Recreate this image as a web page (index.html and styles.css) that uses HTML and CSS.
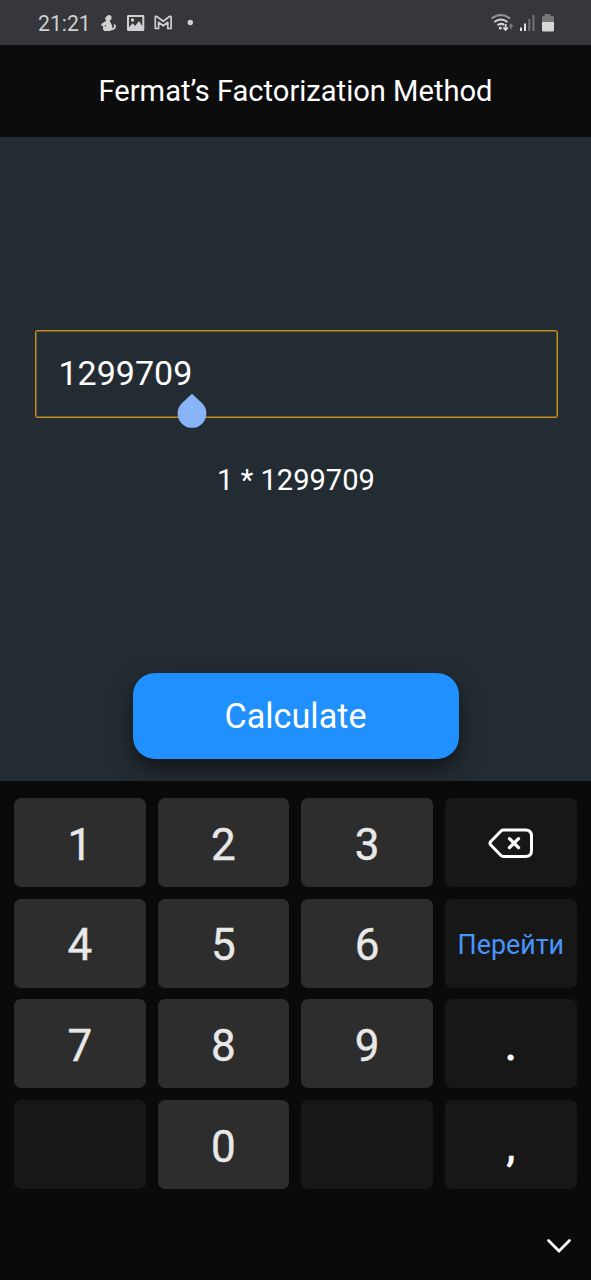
FILE: index.html
```html
<!DOCTYPE html>
<html lang="en">
<head>
<meta charset="utf-8">
<title>Fermat’s Factorization Method</title>
<link rel="stylesheet" href="styles.css">
</head>
<body>
<div class="screen">
  <div class="status">
    <span class="time">21:21</span>
    <svg class="status-left" width="98" height="20" viewBox="100 13 98 20">
      <g fill="#d0d1d1">
        <path d="M106.200 16.800L108.300 15q3.300-.3 3.300 2.700 0 2.300-2 3.100l1.700 3.200q1.500 1.800.9 4.300 1.800-.6 2.100-2.300l-.8-.5 1-1.700 1.600 2.200q-.3 3.800-4.500 4.300l-1.600.6h-6q-1.600-2-.8-4.300l-1.900-1.200v-1.400l3.800-2.600 1.300-.8q-1.600-1-1.300-2.600z"/>
        <path fill-rule="evenodd" d="M128.500 15H143q1.300 0 1.300 1.300v13.400q0 1.300-1.300 1.300h-14.700q-1.300 0-1.300-1.300V16.300q0-1.300 1.500-1.300zM129 17v10.300l3.700-4 2.500 2.800 3.700-5 3.400 5V17z"/>
        <circle cx="132.500" cy="20" r="1.700"/>
        <circle cx="190.300" cy="22.500" r="2.700"/>
      </g>
      <path d="M104.300 26l1.800-1.200-.3 2z" fill="#36373b"/>
      <path d="M155.300 28.500V17.200q.3-1.400 1.600-.7l6.300 4.800 6.300-4.800q1.300-.7 1.600.7v11.300h-3.300v-6.200l-4.600 3.500-4.600-3.500v6.200z" fill="none" stroke="#d0d1d1" stroke-width="1.700" stroke-linejoin="round"/>
    </svg>
    <svg class="status-right" width="66" height="20" viewBox="490 13 66 20">
      <g fill="none" stroke-width="2">
        <path d="M491.500 18.500q9.500-7 18.500 0" stroke="#929496"/>
        <path d="M494.300 22q6.600-5 13.200 0M497.500 25.200q3.300-2.500 6.700-.3" stroke="#d7d8d8"/>
        <path d="M505.600 24v5.500M503.300 27.500l2.300 2.500 2.300-2.500" stroke="#dededf" stroke-width="1.700"/>
        <path d="M511 29v-4M509.300 26.500l1.700-2 1.700 2" stroke="#77797b" stroke-width="1.500"/>
      </g>
      <circle cx="500.300" cy="28" r="1.500" fill="#d7d8d8"/>
      <path d="M520 27.500h2V31h-2zM524 23.500h2V31h-2z" fill="#dedede"/>
      <path d="M528.300 19h2v12h-2zM532.500 15h2v16h-2zM544.500 14h6v2h2.200q1.300 0 1.300 1.300V22h-12v-4.700q0-1.300 1.300-1.300h1.200z" fill="#747678"/>
      <path d="M542 22h12v8.300q0 1.200-1.200 1.200h-9.600q-1.200 0-1.200-1.200z" fill="#d5d6d6"/>
    </svg>
  </div>
  <header class="title">Fermat’s Factorization Method</header>
  <main class="content">
    <div class="field">
      <span class="value">1299709</span>
      <svg class="handle" width="30" height="36" viewBox="0 0 30 36"><path d="M15 .7L25.200 10.300A14.400 14.400 0 1 1 4.800 10.300Z" fill="#8ab4f8"/></svg>
    </div>
    <div class="result">1 * 1299709</div>
    <div class="calculate">Calculate</div>
  </main>
  <section class="keyboard">
    <div class="keys">
      <div class="key">1</div><div class="key">2</div><div class="key">3</div>
      <div class="key dark erase"><svg width="46" height="32" viewBox="0 0 46 32" fill="none" stroke="#fff" stroke-linecap="round" stroke-linejoin="round"><path d="M15.500 3H37.500Q43.500 3 43.500 9V23.500Q43.500 29.500 37.500 29.500H15.500Q14 29.500 13 28.500L2.800 18Q1.200 16.200 2.800 14.500L13 4Q14 3 15.500 3Z" stroke-width="3"/><path d="M21.500 11.700l9 9M30.500 11.700l-9 9" stroke-width="3.300"/></svg></div>
      <div class="key">4</div><div class="key">5</div><div class="key">6</div><div class="key dark go">Перейти</div>
      <div class="key">7</div><div class="key">8</div><div class="key">9</div><div class="key dark point">.</div>
      <div class="key dark"></div><div class="key">0</div><div class="key dark"></div><div class="key dark">,</div>
    </div>
    <div class="bottom"><svg width="26" height="18" viewBox="0 0 26 18"><path d="M2.500 3.500L13 14 23.500 3.500" fill="none" stroke="#fff" stroke-width="2.800" stroke-linecap="round"/></svg></div>
  </section>
</div>
</body>
</html>
```
FILE: styles.css
```css
* { box-sizing: border-box; }
body { margin: 0; background: #0a0a0a; font-family: Roboto, sans-serif; color: #fff; }
.screen { width: 591px; height: 1280px; display: flex; flex-direction: column; overflow: hidden; }
.status { height: 45px; padding: 0 35px 0 38px; display: flex; align-items: center; background: #36373b; }
.time { width: 62px; font-size: 21.200px; line-height: 25px; padding-top: 2px; color: #cfd0d1; }
.status-left, .status-right { display: block; }
.status-right { margin-left: auto; }
.title { height: 92px; background: #0c0c0c; text-align: center; font-size: 29.100px; line-height: 92px; }
.content { height: 644px; padding-top: 193px; background: #242c33; display: flex; flex-direction: column; align-items: center; overflow: hidden; }
.field { position: relative; width: 523px; height: 88px; margin-left: 1px; padding-left: 23px; border: 1px solid #c08b20; border-radius: 2px; box-shadow: inset 0 0 0 1px rgba(192, 139, 32, .5); font-size: 34px; line-height: 84px; }
.handle { position: absolute; left: 141px; top: 62px; }
.result { margin-top: 42px; height: 40px; padding-left: 1px; font-size: 29.100px; line-height: 40px; }
.calculate { margin-top: 173px; width: 326px; height: 86px; border-radius: 22px; background: #2090ff; text-align: center; font-size: 34.200px; line-height: 86px; box-shadow: 0 10px 22px rgba(0, 0, 0, .55); }
.keyboard { height: 499px; padding: 17px 14px 0; background: #0a0a0a; }
.keys { display: grid; grid-template-columns: repeat(4, 131.500px); grid-auto-rows: 89px; gap: 11.700px 12.200px; }
.key { display: flex; align-items: center; justify-content: center; padding-top: 4px; border-radius: 7px; background: #2d2d2d; color: #e8e8e8; font-size: 44px; line-height: 52px; -webkit-text-stroke: .4px #e8e8e8; }
.key.dark { background: #171717; color: #fff; padding-top: 3px; -webkit-text-stroke: .7px #fff; }
.key.erase { padding: 0 0 0 1px; }
.key.point { padding-top: 2px; -webkit-text-stroke: 1.200px #fff; }
.key.go { color: #4895fa; font-size: 26.800px; padding-top: 3px; -webkit-text-stroke: 0; }
.bottom { display: flex; justify-content: flex-end; padding: 48px 5px 0 0; }
```
